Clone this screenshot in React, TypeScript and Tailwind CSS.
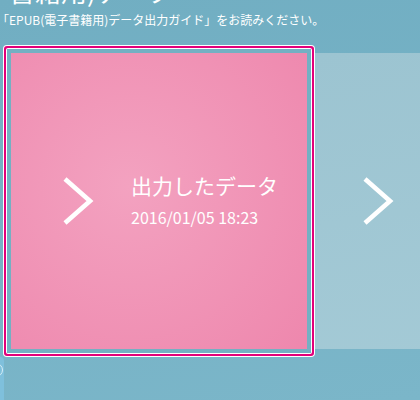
import React from 'react'

// 出力データ選択画面(一部)

const jp = { fontFamily: '"Noto Sans CJK JP", "Noto Sans", sans-serif' }

function Chevron() {
  return (
    <svg width="36" height="50" viewBox="0 0 36 50" className="shrink-0">
      <polyline
        points="5,3 30,25 5,47"
        fill="none"
        stroke="#ffffff"
        strokeWidth="4.6"
        strokeLinejoin="miter"
        strokeLinecap="butt"
      />
    </svg>
  )
}

export default function App() {
  return (
    <div
      className="w-[420px] h-[400px] overflow-hidden bg-[linear-gradient(170deg,#71aec2,#7bb6c9)] text-white"
      style={jp}
    >
      {/* 見出し */}
      <div className="h-[45px] flex flex-col">
        <div className="text-[26px] leading-[26px] mt-[-22px] ml-[9px] whitespace-nowrap">
          書籍用)データ
        </div>
        <p className="text-[12px] leading-[12px] mt-[10px] ml-[-3px] whitespace-nowrap">
          「EPUB(電子書籍用)データ出力ガイド」をお読みください。
        </p>
      </div>

      {/* データ一覧 */}
      <div className="flex items-start">
        <div className="ml-[3px] shrink-0 rounded-[4px] bg-white p-[1px]">
          <div className="rounded-[3px] bg-[#e2007a] p-[2px]">
            <div className="rounded-[2px] bg-white p-[1px]">
              <div className="bg-[#74b0c3] p-[4px]">
                <div className="w-[296px] h-[296px] flex items-center bg-[radial-gradient(circle_at_40%_45%,#f3a2c0,#ee87ad)]">
                  <div className="ml-[49px]">
                    <Chevron />
                  </div>
                  <div className="ml-[35px] -mt-[3px]">
                    <p className="text-[21px] leading-[24px] whitespace-nowrap">出力したデータ</p>
                    <p className="text-[16px] leading-[18px] mt-[11px] whitespace-nowrap">
                      2016/01/05 18:23
                    </p>
                  </div>
                </div>
              </div>
            </div>
          </div>
        </div>

        <div className="mt-[8px] w-[296px] h-[296px] shrink-0 flex items-center bg-[linear-gradient(170deg,#9cc4d1,#a4cad6)]">
          <div className="ml-[45px]">
            <Chevron />
          </div>
        </div>
      </div>

      {/* 左下の要素(見切れ) */}
      <div className="-ml-[16px] w-[20px] h-[50px] rounded-[4px] bg-[#7fc0dc] flex items-start justify-end pt-[6px]">
        <div className="w-[14px] h-[14px] rounded-full border border-[#d8eef6] mr-[1px]" />
      </div>
    </div>
  )
}
